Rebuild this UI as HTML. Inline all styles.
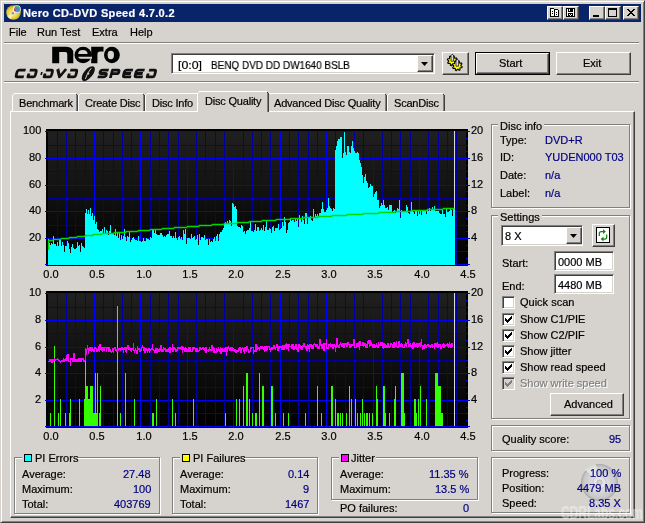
<!DOCTYPE html><html><head><meta charset="utf-8"><style>
*{margin:0;padding:0;box-sizing:border-box}
html,body{width:645px;height:523px;overflow:hidden;background:#d6d3ce;font-family:'Liberation Sans', sans-serif;font-size:11px}
.t{position:absolute;white-space:nowrap;line-height:13px;font-size:11px;will-change:transform;-webkit-text-stroke:0.2px currentColor}
.b{position:absolute}
.raised{background:#d6d3ce;border:1px solid;border-color:#fff #404040 #404040 #fff;box-shadow:inset -1px -1px #808080, inset 1px 1px #d6d3ce}
.sunken{background:#fff;border:1px solid;border-color:#808080 #fff #fff #808080;box-shadow:inset 1px 1px #404040, inset -1px -1px #d6d3ce}
.grp{border:1px solid #808080;box-shadow:inset 1px 1px #fff, 1px 1px #fff}
svg{position:absolute;left:0;top:0}
</style></head><body>
<div class="b" style="left:0px;top:0px;width:645px;height:523px;border-top:1px solid #d6d3ce;border-left:1px solid #d6d3ce;border-right:1px solid #404040;border-bottom:1px solid #404040;box-shadow:inset 1px 1px #fff, inset -1px -1px #808080"></div>
<div class="b" style="left:4px;top:4px;width:637px;height:18px;background:#0a246a"></div>
<div class="t" style="left:23px;top:7px;color:#fff;font-weight:bold;letter-spacing:0.33px">Nero CD-DVD Speed 4.7.0.2</div>
<svg width="645" height="30" style="left:0;top:0">
<defs><radialGradient id="gd" cx="0.45" cy="0.55" r="0.6"><stop offset="0" stop-color="#f8f0c0"/><stop offset="0.55" stop-color="#e8d040"/><stop offset="1" stop-color="#b09810"/></radialGradient></defs>
<circle cx="13.5" cy="12.5" r="7.3" fill="url(#gd)"/>
<path d="M13.5 12.5 L7 16 A7.3 7.3 0 0 0 11 19.3 Z" fill="#fff6d0" opacity="0.7"/>
<circle cx="16.9" cy="9.2" r="3.9" fill="#f4f4f4"/>
<circle cx="17.2" cy="9.4" r="2.9" fill="#30a0e8"/>
<path d="M14.6 7.2 A3 3 0 0 1 19.5 7.5" stroke="#40b040" stroke-width="1" fill="none"/>
<path d="M14.6 8.5 L14.8 11" stroke="#e02010" stroke-width="1.1"/>
<path d="M15.5 7 L18.3 10.4" stroke="#d04040" stroke-width="0.9"/>
<circle cx="12.8" cy="13.2" r="1.2" fill="#9090a0"/>
</svg>
<div class="b" style="left:547px;top:6px;width:16px;height:14px;background:#d6d3ce;border:1px solid;border-color:#fff #404040 #404040 #fff;box-shadow:inset -1px -1px #808080, inset 1px 1px #d6d3ce"></div>
<div class="b" style="left:563px;top:6px;width:16px;height:14px;background:#d6d3ce;border:1px solid;border-color:#fff #404040 #404040 #fff;box-shadow:inset -1px -1px #808080, inset 1px 1px #d6d3ce"></div>
<div class="b" style="left:589px;top:6px;width:16px;height:14px;background:#d6d3ce;border:1px solid;border-color:#fff #404040 #404040 #fff;box-shadow:inset -1px -1px #808080, inset 1px 1px #d6d3ce"></div>
<div class="b" style="left:605px;top:6px;width:16px;height:14px;background:#d6d3ce;border:1px solid;border-color:#fff #404040 #404040 #fff;box-shadow:inset -1px -1px #808080, inset 1px 1px #d6d3ce"></div>
<div class="b" style="left:623px;top:6px;width:16px;height:14px;background:#d6d3ce;border:1px solid;border-color:#fff #404040 #404040 #fff;box-shadow:inset -1px -1px #808080, inset 1px 1px #d6d3ce"></div>
<svg width="645" height="30" style="left:0;top:0" shape-rendering="crispEdges">
<g fill="none" stroke="#000" stroke-width="1">
<!-- copy/book icon -->
</g>
<path d="M550.5 8.5 H553.5 L554.5 9.5 V16.5 H550.5 Z" fill="#fff" stroke="#000"/>
<path d="M554.5 9.5 H557.5 L558.5 10.5 V16.5 H554.5 Z" fill="#fff" stroke="#000"/>
<g fill="#000">
<rect x="552" y="11" width="1" height="1"/><rect x="552" y="13" width="1" height="1"/>
<rect x="556" y="12" width="1" height="1"/><rect x="556" y="14" width="1" height="1"/>
<rect x="566" y="8" width="9" height="9"/>
</g>
<g fill="#fff">
<rect x="567" y="9" width="1" height="7"/><rect x="573" y="9" width="1" height="7"/>
<rect x="568" y="12" width="5" height="1"/><rect x="569" y="9" width="1" height="2"/>
<rect x="569" y="14" width="1" height="1"/><rect x="570" y="15" width="1" height="1"/><rect x="571" y="14" width="1" height="1"/>
</g>
<g fill="#000">
<!-- minimize -->
<rect x="593" y="15" width="6" height="2"/>
<!-- maximize -->
<rect x="608" y="8" width="9" height="2"/><rect x="608" y="8" width="1" height="9"/><rect x="616" y="8" width="1" height="9"/><rect x="608" y="16" width="9" height="1"/>
</g>
<g fill="#000"><rect x="627" y="9" width="2" height="1"/><rect x="633" y="9" width="2" height="1"/><rect x="628" y="10" width="2" height="1"/><rect x="632" y="10" width="2" height="1"/><rect x="629" y="11" width="2" height="1"/><rect x="631" y="11" width="2" height="1"/><rect x="630" y="12" width="2" height="1"/><rect x="630" y="12" width="2" height="1"/><rect x="631" y="13" width="2" height="1"/><rect x="629" y="13" width="2" height="1"/><rect x="632" y="14" width="2" height="1"/><rect x="628" y="14" width="2" height="1"/><rect x="633" y="15" width="2" height="1"/><rect x="627" y="15" width="2" height="1"/></g>
</svg>
<div class="t" style="left:9px;top:26px;color:#000;font-weight:normal;">File</div>
<div class="t" style="left:37px;top:26px;color:#000;font-weight:normal;">Run Test</div>
<div class="t" style="left:92px;top:26px;color:#000;font-weight:normal;">Extra</div>
<div class="t" style="left:130px;top:26px;color:#000;font-weight:normal;">Help</div>
<div class="b" style="left:4px;top:42px;width:635px;height:1px;background:#808080"></div>
<div class="b" style="left:4px;top:43px;width:635px;height:1px;background:#fff"></div>
<div class="b" style="left:4px;top:81px;width:635px;height:1px;background:#808080"></div>
<div class="b" style="left:4px;top:82px;width:635px;height:1px;background:#fff"></div>
<svg width="645" height="523" style="left:0;top:0">
<g fill="#000">
<path d="M52.2 63.2 V46.8 H66.3 Q73.3 46.8 73.3 53.5 V63.2 H67.3 V54.2 Q67.3 52 65.3 52 H59.2 V63.2 Z"/>
<ellipse cx="83.1" cy="55" rx="8.6" ry="8.3"/>
<path d="M91.2 63.2 V46.8 H103.5 V51.4 H100 Q97.4 51.4 97.4 54.5 V63.2 Z"/>
<ellipse cx="111.9" cy="55" rx="7.9" ry="8.3"/>
</g>
<g fill="#d6d3ce">
<path d="M78.2 53.9 H87.6 Q87.4 50.1 82.9 50.1 Q78.2 50.1 78.2 53.9 Z"/>
<path d="M78.3 56.7 H92 V58.7 H80.6 Q78.3 58.7 78.3 56.7 Z"/>
<ellipse cx="110.8" cy="55" rx="3.2" ry="4.2"/>
</g>
<g fill="none" stroke="#111" stroke-width="2.8" stroke-linejoin="round">

<path transform="translate(16.7 69) skewX(-15)" d="M9.2 1.15 H3 Q1.15 1.15 1.15 3.3 V5.7 Q1.15 7.85 3 7.85 H9.2"/>
<path transform="translate(28.9 69) skewX(-15)" d="M1.15 1.15 H6.6 Q8.049999999999999 1.15 8.049999999999999 3.3 V5.7 Q8.049999999999999 7.85 6.6 7.85 H1.15 V4.5"/>
<path transform="translate(40.9 69) skewX(-15)" d="M1 4.5 H2.6"/>
<path transform="translate(45.1 69) skewX(-15)" d="M1.15 1.15 H6.6 Q8.049999999999999 1.15 8.049999999999999 3.3 V5.7 Q8.049999999999999 7.85 6.6 7.85 H1.15 V4.5"/>
<path transform="translate(57.1 69) skewX(-15)" d="M0.6 0 L4.6 7.85 L9.0 0"/>
<path transform="translate(69.4 69) skewX(-15)" d="M1.15 1.15 H6.6 Q8.049999999999999 1.15 8.049999999999999 3.3 V5.7 Q8.049999999999999 7.85 6.6 7.85 H1.15 V4.5"/>
<path transform="translate(99.80000000000001 69) skewX(-15)" d="M9.2 1.15 H3 Q1.15 1.15 1.15 2.9 Q1.15 4.5 3 4.5 H6.4 Q8.049999999999999 4.5 8.049999999999999 6.1 Q8.049999999999999 7.85 6.2 7.85 H0"/>
<path transform="translate(111.60000000000001 69) skewX(-15)" d="M1.15 9 V1.15 H6.4 Q8.049999999999999 1.15 8.049999999999999 2.9 Q8.049999999999999 4.7 6.4 4.7 H1.15"/>
<path transform="translate(124.0 69) skewX(-15)" d="M9.2 1.15 H3 Q1.15 1.15 1.15 3.3 V5.7 Q1.15 7.85 3 7.85 H9.2 M1.15 4.5 H8.2"/>
<path transform="translate(135.70000000000002 69) skewX(-15)" d="M9.2 1.15 H3 Q1.15 1.15 1.15 3.3 V5.7 Q1.15 7.85 3 7.85 H9.2 M1.15 4.5 H8.2"/>
<path transform="translate(148.20000000000002 69) skewX(-15)" d="M1.15 1.15 H6.6 Q8.049999999999999 1.15 8.049999999999999 3.3 V5.7 Q8.049999999999999 7.85 6.6 7.85 H1.15 V4.5"/>
</g>
<g transform="translate(88.3 73.6) rotate(-50)"><ellipse cx="0" cy="0" rx="8.9" ry="4.3" fill="#111"/><path d="M-6 1.2 Q0 -1.4 6 -1.2" stroke="#d6d3ce" stroke-width="0.9" fill="none"/><circle cx="0" cy="0" r="1" fill="#d6d3ce"/></g>
</svg>
<div class="b sunken" style="left:171px;top:53px;width:264px;height:21px;"></div>
<div class="t" style="left:178px;top:59px;color:#000;font-weight:normal;transform:scaleX(1.12);transform-origin:0 0">[0:0]</div>
<div class="t" style="left:211px;top:59px;color:#000;font-weight:normal;transform:scaleX(0.905);transform-origin:0 0">BENQ DVD DD DW1640 BSLB</div>
<div class="b raised" style="left:417px;top:55px;width:16px;height:17px;"></div>
<svg width="645" height="523"><path d="M421 62 h7 l-3.5 4 z" fill="#000"/></svg>
<div class="b raised" style="left:442px;top:52px;width:27px;height:23px"></div>
<svg width="645" height="523"><polygon points="455.90,60.70 457.20,61.68 456.92,62.61 455.29,62.70 454.85,63.25 455.08,64.86 454.21,65.32 453.00,64.23 452.30,64.30 451.32,65.60 450.39,65.32 450.30,63.69 449.75,63.25 448.14,63.48 447.68,62.61 448.77,61.40 448.70,60.70 447.40,59.72 447.68,58.79 449.31,58.70 449.75,58.15 449.52,56.54 450.39,56.08 451.60,57.17 452.30,57.10 453.28,55.80 454.21,56.08 454.30,57.71 454.85,58.15 456.46,57.92 456.92,58.79 455.83,60.00" fill="#ffff00" stroke="#000" stroke-width="1.1" stroke-linejoin="round"/><polygon points="460.90,65.70 462.20,66.68 461.92,67.61 460.29,67.70 459.85,68.25 460.08,69.86 459.21,70.32 458.00,69.23 457.30,69.30 456.32,70.60 455.39,70.32 455.30,68.69 454.75,68.25 453.14,68.48 452.68,67.61 453.77,66.40 453.70,65.70 452.40,64.72 452.68,63.79 454.31,63.70 454.75,63.15 454.52,61.54 455.39,61.08 456.60,62.17 457.30,62.10 458.28,60.80 459.21,61.08 459.30,62.71 459.85,63.15 461.46,62.92 461.92,63.79 460.83,65.00" fill="#ffff00" stroke="#000" stroke-width="1.1" stroke-linejoin="round"/><path d="M451 61.2 V55.7 L452.3 54 L453.6 55.7 V61.2 Z" fill="#d8d8e8" stroke="#000" stroke-width="0.7"/><path d="M456 66.2 V60.7 L457.3 59 L458.6 60.7 V66.2 Z" fill="#d8d8e8" stroke="#000" stroke-width="0.7"/></svg>
<div class="b" style="left:475px;top:52px;width:75px;height:23px;border:1px solid #000"></div>
<div class="b raised" style="left:476px;top:53px;width:73px;height:21px"></div>
<div class="t" style="left:499px;top:57px;color:#000;font-weight:normal;">Start</div>
<div class="b raised" style="left:556px;top:52px;width:75px;height:23px"></div>
<div class="t" style="left:583px;top:57px;color:#000;font-weight:normal;">Exit</div>
<div class="b" style="left:10px;top:111px;width:625px;height:407px;border-top:1px solid #fff;border-left:1px solid #fff;border-right:1px solid #404040;border-bottom:1px solid #404040;box-shadow:inset -1px -1px #808080"></div>
<svg width="645" height="523" shape-rendering="crispEdges"><rect x="12" y="93" width="66" height="18" fill="#d6d3ce"/><rect x="14" y="93" width="62" height="1" fill="#fff"/><rect x="13" y="94" width="1" height="1" fill="#fff"/><rect x="12" y="95" width="1" height="16" fill="#fff"/><rect x="76" y="94" width="1" height="1" fill="#404040"/><rect x="76" y="95" width="1" height="16" fill="#808080"/><rect x="77" y="95" width="1" height="16" fill="#404040"/></svg>
<div class="t" style="left:19px;top:97px;color:#000;font-weight:normal;letter-spacing:-0.2px">Benchmark</div>
<svg width="645" height="523" shape-rendering="crispEdges"><rect x="78" y="93" width="67" height="18" fill="#d6d3ce"/><rect x="80" y="93" width="63" height="1" fill="#fff"/><rect x="79" y="94" width="1" height="1" fill="#fff"/><rect x="78" y="95" width="1" height="16" fill="#fff"/><rect x="143" y="94" width="1" height="1" fill="#404040"/><rect x="143" y="95" width="1" height="16" fill="#808080"/><rect x="144" y="95" width="1" height="16" fill="#404040"/></svg>
<div class="t" style="left:85px;top:97px;color:#000;font-weight:normal;letter-spacing:-0.2px">Create Disc</div>
<svg width="645" height="523" shape-rendering="crispEdges"><rect x="145" y="93" width="55" height="18" fill="#d6d3ce"/><rect x="147" y="93" width="51" height="1" fill="#fff"/><rect x="146" y="94" width="1" height="1" fill="#fff"/><rect x="145" y="95" width="1" height="16" fill="#fff"/><rect x="198" y="94" width="1" height="1" fill="#404040"/><rect x="198" y="95" width="1" height="16" fill="#808080"/><rect x="199" y="95" width="1" height="16" fill="#404040"/></svg>
<div class="t" style="left:152px;top:97px;color:#000;font-weight:normal;letter-spacing:-0.2px">Disc Info</div>
<svg width="645" height="523" shape-rendering="crispEdges"><rect x="267" y="93" width="120" height="18" fill="#d6d3ce"/><rect x="269" y="93" width="116" height="1" fill="#fff"/><rect x="268" y="94" width="1" height="1" fill="#fff"/><rect x="267" y="95" width="1" height="16" fill="#fff"/><rect x="385" y="94" width="1" height="1" fill="#404040"/><rect x="385" y="95" width="1" height="16" fill="#808080"/><rect x="386" y="95" width="1" height="16" fill="#404040"/></svg>
<div class="t" style="left:274px;top:97px;color:#000;font-weight:normal;letter-spacing:-0.2px">Advanced Disc Quality</div>
<svg width="645" height="523" shape-rendering="crispEdges"><rect x="387" y="93" width="58" height="18" fill="#d6d3ce"/><rect x="389" y="93" width="54" height="1" fill="#fff"/><rect x="388" y="94" width="1" height="1" fill="#fff"/><rect x="387" y="95" width="1" height="16" fill="#fff"/><rect x="443" y="94" width="1" height="1" fill="#404040"/><rect x="443" y="95" width="1" height="16" fill="#808080"/><rect x="444" y="95" width="1" height="16" fill="#404040"/></svg>
<div class="t" style="left:394px;top:97px;color:#000;font-weight:normal;letter-spacing:-0.2px">ScanDisc</div>
<svg width="645" height="523" shape-rendering="crispEdges"><rect x="197" y="91" width="72" height="21" fill="#d6d3ce"/><rect x="199" y="91" width="68" height="1" fill="#fff"/><rect x="198" y="92" width="1" height="1" fill="#fff"/><rect x="197" y="93" width="1" height="19" fill="#fff"/><rect x="267" y="92" width="1" height="1" fill="#404040"/><rect x="267" y="93" width="1" height="19" fill="#808080"/><rect x="268" y="93" width="1" height="19" fill="#404040"/></svg>
<div class="t" style="left:205px;top:95px;color:#000;font-weight:normal;letter-spacing:-0.2px">Disc Quality</div>
<svg width="645" height="523" style="left:0;top:0" shape-rendering="crispEdges"><defs><linearGradient id="bg" x1="0" y1="0" x2="0" y2="1"><stop offset="0" stop-color="#202020"/><stop offset="1" stop-color="#000"/></linearGradient></defs>
<rect x="46" y="129" width="422" height="137" fill="#000"/>
<rect x="45" y="129" width="1" height="1" fill="#d6d3ce"/>
<rect x="48" y="131" width="418" height="134" fill="url(#bg)"/>
<rect x="45" y="131" width="425" height="1" fill="#0000ff"/>
<rect x="48" y="145" width="418" height="1" fill="#0000a0"/>
<rect x="45" y="158" width="425" height="1" fill="#0000ff"/>
<rect x="48" y="171" width="418" height="1" fill="#0000a0"/>
<rect x="45" y="185" width="425" height="1" fill="#0000ff"/>
<rect x="48" y="198" width="418" height="1" fill="#0000a0"/>
<rect x="45" y="211" width="425" height="1" fill="#0000ff"/>
<rect x="48" y="225" width="418" height="1" fill="#0000a0"/>
<rect x="45" y="238" width="425" height="1" fill="#0000ff"/>
<rect x="48" y="251" width="418" height="1" fill="#0000a0"/>
<rect x="45" y="264" width="425" height="1" fill="#0000ff"/>
<rect x="57" y="131" width="1" height="135" fill="#0000a0"/>
<rect x="66" y="131" width="1" height="135" fill="#0000a0"/>
<rect x="75" y="131" width="1" height="135" fill="#0000a0"/>
<rect x="85" y="131" width="1" height="135" fill="#0000a0"/>
<rect x="94" y="131" width="1" height="135" fill="#0000ff"/>
<rect x="103" y="131" width="1" height="135" fill="#0000a0"/>
<rect x="113" y="131" width="1" height="135" fill="#0000a0"/>
<rect x="122" y="131" width="1" height="135" fill="#0000a0"/>
<rect x="131" y="131" width="1" height="135" fill="#0000a0"/>
<rect x="140" y="131" width="1" height="135" fill="#0000ff"/>
<rect x="150" y="131" width="1" height="135" fill="#0000a0"/>
<rect x="159" y="131" width="1" height="135" fill="#0000a0"/>
<rect x="168" y="131" width="1" height="135" fill="#0000a0"/>
<rect x="178" y="131" width="1" height="135" fill="#0000a0"/>
<rect x="187" y="131" width="1" height="135" fill="#0000ff"/>
<rect x="196" y="131" width="1" height="135" fill="#0000a0"/>
<rect x="205" y="131" width="1" height="135" fill="#0000a0"/>
<rect x="215" y="131" width="1" height="135" fill="#0000a0"/>
<rect x="224" y="131" width="1" height="135" fill="#0000a0"/>
<rect x="233" y="131" width="1" height="135" fill="#0000ff"/>
<rect x="243" y="131" width="1" height="135" fill="#0000a0"/>
<rect x="252" y="131" width="1" height="135" fill="#0000a0"/>
<rect x="261" y="131" width="1" height="135" fill="#0000a0"/>
<rect x="270" y="131" width="1" height="135" fill="#0000a0"/>
<rect x="280" y="131" width="1" height="135" fill="#0000ff"/>
<rect x="289" y="131" width="1" height="135" fill="#0000a0"/>
<rect x="298" y="131" width="1" height="135" fill="#0000a0"/>
<rect x="308" y="131" width="1" height="135" fill="#0000a0"/>
<rect x="317" y="131" width="1" height="135" fill="#0000a0"/>
<rect x="326" y="131" width="1" height="135" fill="#0000ff"/>
<rect x="335" y="131" width="1" height="135" fill="#0000a0"/>
<rect x="345" y="131" width="1" height="135" fill="#0000a0"/>
<rect x="354" y="131" width="1" height="135" fill="#0000a0"/>
<rect x="363" y="131" width="1" height="135" fill="#0000a0"/>
<rect x="373" y="131" width="1" height="135" fill="#0000ff"/>
<rect x="382" y="131" width="1" height="135" fill="#0000a0"/>
<rect x="391" y="131" width="1" height="135" fill="#0000a0"/>
<rect x="400" y="131" width="1" height="135" fill="#0000a0"/>
<rect x="410" y="131" width="1" height="135" fill="#0000a0"/>
<rect x="419" y="131" width="1" height="135" fill="#0000ff"/>
<rect x="428" y="131" width="1" height="135" fill="#0000a0"/>
<rect x="438" y="131" width="1" height="135" fill="#0000a0"/>
<rect x="447" y="131" width="1" height="135" fill="#0000a0"/>
<rect x="456" y="131" width="1" height="135" fill="#0000a0"/>
<rect x="466" y="138" width="2" height="1" fill="#0000ff"/>
<rect x="466" y="145" width="2" height="1" fill="#0000ff"/>
<rect x="466" y="151" width="2" height="1" fill="#0000ff"/>
<rect x="466" y="165" width="2" height="1" fill="#0000ff"/>
<rect x="466" y="171" width="2" height="1" fill="#0000ff"/>
<rect x="466" y="178" width="2" height="1" fill="#0000ff"/>
<rect x="466" y="191" width="2" height="1" fill="#0000ff"/>
<rect x="466" y="198" width="2" height="1" fill="#0000ff"/>
<rect x="466" y="205" width="2" height="1" fill="#0000ff"/>
<rect x="466" y="218" width="2" height="1" fill="#0000ff"/>
<rect x="466" y="225" width="2" height="1" fill="#0000ff"/>
<rect x="466" y="231" width="2" height="1" fill="#0000ff"/>
<rect x="466" y="245" width="2" height="1" fill="#0000ff"/>
<rect x="466" y="251" width="2" height="1" fill="#0000ff"/>
<rect x="466" y="258" width="2" height="1" fill="#0000ff"/>
<rect x="454" y="131" width="1" height="134" fill="#d8d8d8"/>
<path d="M48 265V239H49V243H50V245H51V243H52V244H53V236H54V244H55V244H56V246H57V242H58V246H59V239H60V240H61V246H62V242H63V245H64V252H65V246H66V246H67V241H68V243H69V249H70V253H71V247H72V244H73V248H74V249H75V249H76V248H77V242H78V246H79V245H80V252H81V243H82V246H83V247H84V248H85V213H86V209H87V214H88V210H89V214H90V208H91V216H92V213H93V220H94V216H95V224H96V222H97V229H98V230H99V232H100V231H101V231H102V229H103V233H104V227H105V233H106V230H107V231H108V235H109V231H110V225H111V233H112V234H113V234H114V235H115V229H116V236H117V232H118V238H119V233H120V240H121V235H122V239H123V236H124V229H125V237H126V241H127V236H128V237H129V231H130V242H131V240H132V238H133V237H134V239H135V240H136V240H137V241H138V236H139V241H140V241H141V242H142V241H143V238H144V241H145V241H146V238H147V239H148V239H149V240H150V237H151V238H152V229H153V230H154V233H155V230H156V234H157V235H158V235H159V235H160V233H161V233H162V235H163V237H164V236H165V237H166V235H167V234H168V234H169V231H170V236H171V236H172V238H173V236H174V238H175V232H176V238H177V240H178V237H179V236H180V239H181V237H182V240H183V230H184V234H185V229H186V244H187V238H188V238H189V238H190V239H191V234H192V238H193V237H194V236H195V240H196V239H197V235H198V245H199V234H200V240H201V237H202V237H203V238H204V235H205V240H206V239H207V239H208V245H209V239H210V242H211V241H212V242H213V239H214V237H215V241H216V236H217V234H218V241H219V234H220V232H221V232H222V230H223V228H224V224H225V222H226V224H227V221H228V223H229V220H230V221H231V226H232V203H233V204H234V207H235V206H236V209H237V226H238V227H239V227H240V228H241V225H242V226H243V232H244V231H245V234H246V231H247V230H248V230H249V228H250V221H251V231H252V231H253V232H254V230H255V224H256V231H257V227H258V227H259V231H260V230H261V228H262V230H263V225H264V231H265V227H266V221H267V230H268V230H269V228H270V229H271V233H272V227H273V226H274V231H275V228H276V228H277V228H278V224H279V230H280V229H281V228H282V222H283V226H284V217H285V222H286V233H287V230H288V223H289V222H290V219H291V221H292V220H293V220H294V222H295V218H296V221H297V219H298V227H299V215H300V219H301V222H302V216H303V220H304V224H305V213H306V213H307V224H308V218H309V217H310V216H311V220H312V221H313V209H314V218H315V214H316V216H317V214H318V216H319V213H320V213H321V209H322V202H323V209H324V212H325V212H326V210H327V208H328V198H329V206H330V208H331V209H332V211H333V208H334V209H335V150H336V146H337V141H338V139H339V139H340V137H341V137H342V158H343V153H344V132H345V152H346V155H347V146H348V146H349V152H350V153H351V146H352V141H353V148H354V151H355V153H356V153H357V152H358V153H359V160H360V163H361V167H362V175H363V183H364V177H365V174H366V181H367V183H368V188H369V187H370V184H371V186H372V186H373V197H374V194H375V192H376V191H377V200H378V200H379V208H380V206H381V203H382V205H383V200H384V205H385V208H386V208H387V207H388V210H389V205H390V205H391V205H392V213H393V211H394V210H395V213H396V212H397V208H398V209H399V200H400V218H401V210H402V211H403V211H404V212H405V211H406V205H407V207H408V213H409V214H410V212H411V202H412V211H413V212H414V214H415V210H416V211H417V216H418V210H419V214H420V210H421V215H422V210H423V211H424V210H425V210H426V214H427V210H428V211H429V208H430V211H431V210H432V207H433V210H434V206H435V211H436V211H437V211H438V211H439V213H440V214H441V214H442V210H443V214H444V214H445V217H446V208H447V212H448V212H449V211H450V209H451V210H452V216H453V208H454V209H455V265Z" fill="#00ffff"/>
<path d="M48.5 250 V240.5L49.5 240.5L50.5 240.5L51.5 240.5L52.5 240.5L53.5 239.5L54.5 239.5L55.5 239.5L56.5 239.5L57.5 239.5L58.5 239.5L59.5 239.5L60.5 239.5L61.5 238.5L62.5 238.5L63.5 238.5L64.5 238.5L65.5 238.5L66.5 238.5L67.5 238.5L68.5 238.5L69.5 237.5L70.5 237.5L71.5 237.5L72.5 237.5L73.5 237.5L74.5 237.5L75.5 237.5L76.5 237.5L77.5 236.5L78.5 236.5L79.5 236.5L80.5 236.5L81.5 236.5L82.5 236.5L83.5 236.5L84.5 236.5L85.5 235.5L86.5 235.5L87.5 235.5L88.5 235.5L89.5 235.5L90.5 235.5L91.5 235.5L92.5 235.5L93.5 234.5L94.5 234.5L95.5 234.5L96.5 234.5L97.5 234.5L98.5 234.5L99.5 234.5L100.5 234.5L101.5 234.5L102.5 233.5L103.5 233.5L104.5 233.5L105.5 233.5L106.5 233.5L107.5 233.5L108.5 233.5L109.5 233.5L110.5 233.5L111.5 233.5L112.5 233.5L113.5 233.5L114.5 232.5L115.5 232.5L116.5 232.5L117.5 232.5L118.5 232.5L119.5 232.5L120.5 232.5L121.5 232.5L122.5 232.5L123.5 232.5L124.5 232.5L125.5 232.5L126.5 231.5L127.5 231.5L128.5 231.5L129.5 231.5L130.5 231.5L131.5 231.5L132.5 231.5L133.5 231.5L134.5 231.5L135.5 231.5L136.5 231.5L137.5 231.5L138.5 230.5L139.5 230.5L140.5 230.5L141.5 230.5L142.5 230.5L143.5 230.5L144.5 230.5L145.5 230.5L146.5 230.5L147.5 230.5L148.5 230.5L149.5 230.5L150.5 229.5L151.5 229.5L152.5 229.5L153.5 229.5L154.5 229.5L155.5 229.5L156.5 229.5L157.5 229.5L158.5 229.5L159.5 229.5L160.5 229.5L161.5 229.5L162.5 228.5L163.5 228.5L164.5 228.5L165.5 228.5L166.5 228.5L167.5 228.5L168.5 228.5L169.5 228.5L170.5 228.5L171.5 228.5L172.5 228.5L173.5 228.5L174.5 227.5L175.5 227.5L176.5 227.5L177.5 227.5L178.5 227.5L179.5 227.5L180.5 227.5L181.5 227.5L182.5 227.5L183.5 227.5L184.5 227.5L185.5 227.5L186.5 227.5L187.5 226.5L188.5 226.5L189.5 226.5L190.5 226.5L191.5 226.5L192.5 226.5L193.5 226.5L194.5 226.5L195.5 226.5L196.5 226.5L197.5 226.5L198.5 226.5L199.5 225.5L200.5 225.5L201.5 225.5L202.5 225.5L203.5 225.5L204.5 225.5L205.5 225.5L206.5 225.5L207.5 225.5L208.5 225.5L209.5 225.5L210.5 225.5L211.5 225.5L212.5 224.5L213.5 224.5L214.5 224.5L215.5 224.5L216.5 224.5L217.5 224.5L218.5 224.5L219.5 224.5L220.5 224.5L221.5 224.5L222.5 224.5L223.5 224.5L224.5 223.5L225.5 223.5L226.5 223.5L227.5 223.5L228.5 223.5L229.5 223.5L230.5 223.5L231.5 223.5L232.5 223.5L233.5 223.5L234.5 223.5L235.5 223.5L236.5 223.5L237.5 222.5L238.5 222.5L239.5 222.5L240.5 222.5L241.5 222.5L242.5 222.5L243.5 222.5L244.5 222.5L245.5 222.5L246.5 222.5L247.5 222.5L248.5 222.5L249.5 221.5L250.5 221.5L251.5 221.5L252.5 221.5L253.5 221.5L254.5 221.5L255.5 221.5L256.5 221.5L257.5 221.5L258.5 221.5L259.5 221.5L260.5 221.5L261.5 221.5L262.5 220.5L263.5 220.5L264.5 220.5L265.5 220.5L266.5 220.5L267.5 220.5L268.5 220.5L269.5 220.5L270.5 220.5L271.5 220.5L272.5 220.5L273.5 220.5L274.5 220.5L275.5 220.5L276.5 219.5L277.5 219.5L278.5 219.5L279.5 219.5L280.5 219.5L281.5 219.5L282.5 219.5L283.5 219.5L284.5 219.5L285.5 219.5L286.5 219.5L287.5 219.5L288.5 219.5L289.5 219.5L290.5 218.5L291.5 218.5L292.5 218.5L293.5 218.5L294.5 218.5L295.5 218.5L296.5 218.5L297.5 218.5L298.5 218.5L299.5 218.5L300.5 218.5L301.5 218.5L302.5 218.5L303.5 218.5L304.5 217.5L305.5 217.5L306.5 217.5L307.5 217.5L308.5 217.5L309.5 217.5L310.5 217.5L311.5 217.5L312.5 217.5L313.5 217.5L314.5 217.5L315.5 217.5L316.5 217.5L317.5 217.5L318.5 216.5L319.5 216.5L320.5 216.5L321.5 216.5L322.5 216.5L323.5 216.5L324.5 216.5L325.5 216.5L326.5 216.5L327.5 216.5L328.5 216.5L329.5 216.5L330.5 216.5L331.5 216.5L332.5 215.5L333.5 215.5L334.5 215.5L335.5 215.5L336.5 215.5L337.5 215.5L338.5 215.5L339.5 215.5L340.5 215.5L341.5 215.5L342.5 215.5L343.5 215.5L344.5 215.5L345.5 215.5L346.5 215.5L347.5 214.5L348.5 214.5L349.5 214.5L350.5 214.5L351.5 214.5L352.5 214.5L353.5 214.5L354.5 214.5L355.5 214.5L356.5 214.5L357.5 214.5L358.5 214.5L359.5 214.5L360.5 214.5L361.5 214.5L362.5 214.5L363.5 213.5L364.5 213.5L365.5 213.5L366.5 213.5L367.5 213.5L368.5 213.5L369.5 213.5L370.5 213.5L371.5 213.5L372.5 213.5L373.5 213.5L374.5 213.5L375.5 213.5L376.5 213.5L377.5 213.5L378.5 213.5L379.5 212.5L380.5 212.5L381.5 212.5L382.5 212.5L383.5 212.5L384.5 212.5L385.5 212.5L386.5 212.5L387.5 212.5L388.5 212.5L389.5 212.5L390.5 212.5L391.5 212.5L392.5 212.5L393.5 212.5L394.5 212.5L395.5 211.5L396.5 211.5L397.5 211.5L398.5 211.5L399.5 211.5L400.5 211.5L401.5 211.5L402.5 211.5L403.5 211.5L404.5 211.5L405.5 211.5L406.5 211.5L407.5 211.5L408.5 211.5L409.5 211.5L410.5 211.5L411.5 210.5L412.5 210.5L413.5 210.5L414.5 210.5L415.5 210.5L416.5 210.5L417.5 210.5L418.5 210.5L419.5 210.5L420.5 210.5L421.5 210.5L422.5 210.5L423.5 210.5L424.5 210.5L425.5 210.5L426.5 210.5L427.5 209.5L428.5 209.5L429.5 209.5L430.5 209.5L431.5 209.5L432.5 209.5L433.5 209.5L434.5 209.5L435.5 209.5L436.5 209.5L437.5 209.5L438.5 209.5L439.5 209.5L440.5 209.5L441.5 209.5L442.5 209.5L443.5 208.5L444.5 208.5L445.5 208.5L446.5 208.5L447.5 208.5L448.5 208.5L449.5 208.5L450.5 208.5L451.5 208.5L452.5 208.5L453.5 208.5L454.5 208.5" fill="none" stroke="#00d800" stroke-width="1.3" shape-rendering="geometricPrecision"/>
<rect x="46" y="291" width="422" height="137" fill="#000"/>
<rect x="45" y="291" width="1" height="1" fill="#d6d3ce"/>
<rect x="48" y="293" width="418" height="134" fill="url(#bg)"/>
<rect x="45" y="293" width="425" height="1" fill="#0000ff"/>
<rect x="48" y="307" width="418" height="1" fill="#0000a0"/>
<rect x="45" y="320" width="425" height="1" fill="#0000ff"/>
<rect x="48" y="333" width="418" height="1" fill="#0000a0"/>
<rect x="45" y="347" width="425" height="1" fill="#0000ff"/>
<rect x="48" y="360" width="418" height="1" fill="#0000a0"/>
<rect x="45" y="373" width="425" height="1" fill="#0000ff"/>
<rect x="48" y="387" width="418" height="1" fill="#0000a0"/>
<rect x="45" y="400" width="425" height="1" fill="#0000ff"/>
<rect x="48" y="413" width="418" height="1" fill="#0000a0"/>
<rect x="45" y="426" width="425" height="1" fill="#0000ff"/>
<rect x="57" y="293" width="1" height="135" fill="#0000a0"/>
<rect x="66" y="293" width="1" height="135" fill="#0000a0"/>
<rect x="75" y="293" width="1" height="135" fill="#0000a0"/>
<rect x="85" y="293" width="1" height="135" fill="#0000a0"/>
<rect x="94" y="293" width="1" height="135" fill="#0000ff"/>
<rect x="103" y="293" width="1" height="135" fill="#0000a0"/>
<rect x="113" y="293" width="1" height="135" fill="#0000a0"/>
<rect x="122" y="293" width="1" height="135" fill="#0000a0"/>
<rect x="131" y="293" width="1" height="135" fill="#0000a0"/>
<rect x="140" y="293" width="1" height="135" fill="#0000ff"/>
<rect x="150" y="293" width="1" height="135" fill="#0000a0"/>
<rect x="159" y="293" width="1" height="135" fill="#0000a0"/>
<rect x="168" y="293" width="1" height="135" fill="#0000a0"/>
<rect x="178" y="293" width="1" height="135" fill="#0000a0"/>
<rect x="187" y="293" width="1" height="135" fill="#0000ff"/>
<rect x="196" y="293" width="1" height="135" fill="#0000a0"/>
<rect x="205" y="293" width="1" height="135" fill="#0000a0"/>
<rect x="215" y="293" width="1" height="135" fill="#0000a0"/>
<rect x="224" y="293" width="1" height="135" fill="#0000a0"/>
<rect x="233" y="293" width="1" height="135" fill="#0000ff"/>
<rect x="243" y="293" width="1" height="135" fill="#0000a0"/>
<rect x="252" y="293" width="1" height="135" fill="#0000a0"/>
<rect x="261" y="293" width="1" height="135" fill="#0000a0"/>
<rect x="270" y="293" width="1" height="135" fill="#0000a0"/>
<rect x="280" y="293" width="1" height="135" fill="#0000ff"/>
<rect x="289" y="293" width="1" height="135" fill="#0000a0"/>
<rect x="298" y="293" width="1" height="135" fill="#0000a0"/>
<rect x="308" y="293" width="1" height="135" fill="#0000a0"/>
<rect x="317" y="293" width="1" height="135" fill="#0000a0"/>
<rect x="326" y="293" width="1" height="135" fill="#0000ff"/>
<rect x="335" y="293" width="1" height="135" fill="#0000a0"/>
<rect x="345" y="293" width="1" height="135" fill="#0000a0"/>
<rect x="354" y="293" width="1" height="135" fill="#0000a0"/>
<rect x="363" y="293" width="1" height="135" fill="#0000a0"/>
<rect x="373" y="293" width="1" height="135" fill="#0000ff"/>
<rect x="382" y="293" width="1" height="135" fill="#0000a0"/>
<rect x="391" y="293" width="1" height="135" fill="#0000a0"/>
<rect x="400" y="293" width="1" height="135" fill="#0000a0"/>
<rect x="410" y="293" width="1" height="135" fill="#0000a0"/>
<rect x="419" y="293" width="1" height="135" fill="#0000ff"/>
<rect x="428" y="293" width="1" height="135" fill="#0000a0"/>
<rect x="438" y="293" width="1" height="135" fill="#0000a0"/>
<rect x="447" y="293" width="1" height="135" fill="#0000a0"/>
<rect x="456" y="293" width="1" height="135" fill="#0000a0"/>
<rect x="466" y="300" width="2" height="1" fill="#0000ff"/>
<rect x="466" y="307" width="2" height="1" fill="#0000ff"/>
<rect x="466" y="313" width="2" height="1" fill="#0000ff"/>
<rect x="466" y="327" width="2" height="1" fill="#0000ff"/>
<rect x="466" y="333" width="2" height="1" fill="#0000ff"/>
<rect x="466" y="340" width="2" height="1" fill="#0000ff"/>
<rect x="466" y="353" width="2" height="1" fill="#0000ff"/>
<rect x="466" y="360" width="2" height="1" fill="#0000ff"/>
<rect x="466" y="367" width="2" height="1" fill="#0000ff"/>
<rect x="466" y="380" width="2" height="1" fill="#0000ff"/>
<rect x="466" y="387" width="2" height="1" fill="#0000ff"/>
<rect x="466" y="393" width="2" height="1" fill="#0000ff"/>
<rect x="466" y="407" width="2" height="1" fill="#0000ff"/>
<rect x="466" y="413" width="2" height="1" fill="#0000ff"/>
<rect x="466" y="420" width="2" height="1" fill="#0000ff"/>
<rect x="50" y="413" width="1" height="13" fill="#33ff00"/>
<rect x="54" y="346" width="1" height="80" fill="#33ff00"/>
<rect x="58" y="413" width="1" height="13" fill="#33ff00"/>
<rect x="60" y="399" width="1" height="27" fill="#33ff00"/>
<rect x="65" y="413" width="1" height="13" fill="#33ff00"/>
<rect x="69" y="413" width="1" height="13" fill="#33ff00"/>
<rect x="70" y="399" width="1" height="27" fill="#33ff00"/>
<rect x="79" y="399" width="1" height="27" fill="#33ff00"/>
<rect x="84" y="399" width="1" height="27" fill="#33ff00"/>
<rect x="85" y="360" width="1" height="66" fill="#33ff00"/>
<rect x="86" y="386" width="1" height="40" fill="#33ff00"/>
<rect x="87" y="386" width="1" height="40" fill="#33ff00"/>
<rect x="88" y="399" width="1" height="27" fill="#33ff00"/>
<rect x="89" y="399" width="1" height="27" fill="#33ff00"/>
<rect x="90" y="386" width="1" height="40" fill="#33ff00"/>
<rect x="91" y="386" width="1" height="40" fill="#33ff00"/>
<rect x="92" y="386" width="1" height="40" fill="#33ff00"/>
<rect x="93" y="413" width="1" height="13" fill="#33ff00"/>
<rect x="94" y="413" width="1" height="13" fill="#33ff00"/>
<rect x="95" y="373" width="1" height="53" fill="#33ff00"/>
<rect x="96" y="413" width="1" height="13" fill="#33ff00"/>
<rect x="97" y="373" width="1" height="53" fill="#33ff00"/>
<rect x="99" y="413" width="1" height="13" fill="#33ff00"/>
<rect x="100" y="386" width="1" height="40" fill="#33ff00"/>
<rect x="117" y="306" width="1" height="120" fill="#33ff00"/>
<rect x="120" y="413" width="1" height="13" fill="#33ff00"/>
<rect x="125" y="373" width="1" height="53" fill="#33ff00"/>
<rect x="134" y="399" width="1" height="27" fill="#33ff00"/>
<rect x="152" y="413" width="1" height="13" fill="#33ff00"/>
<rect x="153" y="413" width="1" height="13" fill="#33ff00"/>
<rect x="156" y="399" width="1" height="27" fill="#33ff00"/>
<rect x="172" y="399" width="1" height="27" fill="#33ff00"/>
<rect x="175" y="413" width="1" height="13" fill="#33ff00"/>
<rect x="193" y="399" width="1" height="27" fill="#33ff00"/>
<rect x="225" y="413" width="1" height="13" fill="#33ff00"/>
<rect x="236" y="399" width="1" height="27" fill="#33ff00"/>
<rect x="239" y="399" width="1" height="27" fill="#33ff00"/>
<rect x="243" y="386" width="1" height="40" fill="#33ff00"/>
<rect x="246" y="373" width="1" height="53" fill="#33ff00"/>
<rect x="247" y="373" width="1" height="53" fill="#33ff00"/>
<rect x="249" y="399" width="1" height="27" fill="#33ff00"/>
<rect x="252" y="413" width="1" height="13" fill="#33ff00"/>
<rect x="255" y="413" width="1" height="13" fill="#33ff00"/>
<rect x="256" y="413" width="1" height="13" fill="#33ff00"/>
<rect x="259" y="373" width="1" height="53" fill="#33ff00"/>
<rect x="262" y="386" width="1" height="40" fill="#33ff00"/>
<rect x="263" y="386" width="1" height="40" fill="#33ff00"/>
<rect x="271" y="386" width="1" height="40" fill="#33ff00"/>
<rect x="272" y="386" width="1" height="40" fill="#33ff00"/>
<rect x="275" y="413" width="1" height="13" fill="#33ff00"/>
<rect x="283" y="413" width="1" height="13" fill="#33ff00"/>
<rect x="288" y="413" width="1" height="13" fill="#33ff00"/>
<rect x="305" y="413" width="1" height="13" fill="#33ff00"/>
<rect x="317" y="386" width="1" height="40" fill="#33ff00"/>
<rect x="321" y="413" width="1" height="13" fill="#33ff00"/>
<rect x="331" y="386" width="1" height="40" fill="#33ff00"/>
<rect x="332" y="386" width="1" height="40" fill="#33ff00"/>
<rect x="335" y="399" width="1" height="27" fill="#33ff00"/>
<rect x="337" y="413" width="1" height="13" fill="#33ff00"/>
<rect x="338" y="413" width="1" height="13" fill="#33ff00"/>
<rect x="340" y="413" width="1" height="13" fill="#33ff00"/>
<rect x="342" y="413" width="1" height="13" fill="#33ff00"/>
<rect x="346" y="413" width="1" height="13" fill="#33ff00"/>
<rect x="349" y="386" width="1" height="40" fill="#33ff00"/>
<rect x="351" y="399" width="1" height="27" fill="#33ff00"/>
<rect x="355" y="399" width="1" height="27" fill="#33ff00"/>
<rect x="357" y="413" width="1" height="13" fill="#33ff00"/>
<rect x="360" y="413" width="1" height="13" fill="#33ff00"/>
<rect x="362" y="399" width="1" height="27" fill="#33ff00"/>
<rect x="364" y="413" width="1" height="13" fill="#33ff00"/>
<rect x="366" y="413" width="1" height="13" fill="#33ff00"/>
<rect x="367" y="413" width="1" height="13" fill="#33ff00"/>
<rect x="369" y="413" width="1" height="13" fill="#33ff00"/>
<rect x="372" y="413" width="1" height="13" fill="#33ff00"/>
<rect x="376" y="386" width="1" height="40" fill="#33ff00"/>
<rect x="377" y="399" width="1" height="27" fill="#33ff00"/>
<rect x="383" y="386" width="1" height="40" fill="#33ff00"/>
<rect x="384" y="386" width="1" height="40" fill="#33ff00"/>
<rect x="385" y="413" width="1" height="13" fill="#33ff00"/>
<rect x="389" y="413" width="1" height="13" fill="#33ff00"/>
<rect x="394" y="399" width="1" height="27" fill="#33ff00"/>
<rect x="395" y="386" width="1" height="40" fill="#33ff00"/>
<rect x="401" y="373" width="1" height="53" fill="#33ff00"/>
<rect x="402" y="373" width="1" height="53" fill="#33ff00"/>
<rect x="403" y="373" width="1" height="53" fill="#33ff00"/>
<rect x="404" y="413" width="1" height="13" fill="#33ff00"/>
<rect x="414" y="399" width="1" height="27" fill="#33ff00"/>
<rect x="415" y="399" width="1" height="27" fill="#33ff00"/>
<rect x="416" y="413" width="1" height="13" fill="#33ff00"/>
<rect x="418" y="399" width="1" height="27" fill="#33ff00"/>
<rect x="420" y="386" width="1" height="40" fill="#33ff00"/>
<rect x="426" y="399" width="1" height="27" fill="#33ff00"/>
<rect x="435" y="373" width="1" height="53" fill="#33ff00"/>
<rect x="436" y="373" width="1" height="53" fill="#33ff00"/>
<rect x="437" y="373" width="1" height="53" fill="#33ff00"/>
<rect x="438" y="386" width="1" height="40" fill="#33ff00"/>
<rect x="439" y="386" width="1" height="40" fill="#33ff00"/>
<rect x="440" y="386" width="1" height="40" fill="#33ff00"/>
<rect x="441" y="413" width="1" height="13" fill="#33ff00"/>
<rect x="442" y="413" width="1" height="13" fill="#33ff00"/>
<rect x="48" y="361" width="1" height="1" fill="#ff00ff"/><rect x="49" y="359" width="1" height="3" fill="#ff00ff"/><rect x="50" y="359" width="1" height="3" fill="#ff00ff"/><rect x="51" y="359" width="1" height="4" fill="#ff00ff"/><rect x="52" y="359" width="1" height="4" fill="#ff00ff"/><rect x="53" y="359" width="1" height="3" fill="#ff00ff"/><rect x="54" y="358" width="1" height="3" fill="#ff00ff"/><rect x="55" y="359" width="1" height="2" fill="#ff00ff"/><rect x="56" y="359" width="1" height="1" fill="#ff00ff"/><rect x="57" y="358" width="1" height="2" fill="#ff00ff"/><rect x="58" y="359" width="1" height="2" fill="#ff00ff"/><rect x="59" y="360" width="1" height="2" fill="#ff00ff"/><rect x="60" y="361" width="1" height="2" fill="#ff00ff"/><rect x="61" y="360" width="1" height="2" fill="#ff00ff"/><rect x="62" y="360" width="1" height="2" fill="#ff00ff"/><rect x="63" y="358" width="1" height="4" fill="#ff00ff"/><rect x="64" y="359" width="1" height="3" fill="#ff00ff"/><rect x="65" y="358" width="1" height="3" fill="#ff00ff"/><rect x="66" y="355" width="1" height="6" fill="#ff00ff"/><rect x="67" y="354" width="1" height="7" fill="#ff00ff"/><rect x="68" y="354" width="1" height="8" fill="#ff00ff"/><rect x="69" y="361" width="1" height="1" fill="#ff00ff"/><rect x="70" y="358" width="1" height="8" fill="#ff00ff"/><rect x="71" y="358" width="1" height="2" fill="#ff00ff"/><rect x="72" y="358" width="1" height="4" fill="#ff00ff"/><rect x="73" y="353" width="1" height="9" fill="#ff00ff"/><rect x="74" y="353" width="1" height="9" fill="#ff00ff"/><rect x="75" y="359" width="1" height="3" fill="#ff00ff"/><rect x="76" y="359" width="1" height="3" fill="#ff00ff"/><rect x="77" y="359" width="1" height="3" fill="#ff00ff"/><rect x="78" y="358" width="1" height="4" fill="#ff00ff"/><rect x="79" y="358" width="1" height="4" fill="#ff00ff"/><rect x="80" y="358" width="1" height="4" fill="#ff00ff"/><rect x="81" y="358" width="1" height="4" fill="#ff00ff"/><rect x="82" y="358" width="1" height="2" fill="#ff00ff"/><rect x="83" y="358" width="1" height="4" fill="#ff00ff"/><rect x="84" y="360" width="1" height="2" fill="#ff00ff"/><rect x="85" y="348" width="1" height="13" fill="#ff00ff"/><rect x="86" y="349" width="1" height="6" fill="#ff00ff"/><rect x="87" y="345" width="1" height="5" fill="#ff00ff"/><rect x="88" y="348" width="1" height="6" fill="#ff00ff"/><rect x="89" y="347" width="1" height="4" fill="#ff00ff"/><rect x="90" y="347" width="1" height="4" fill="#ff00ff"/><rect x="91" y="347" width="1" height="5" fill="#ff00ff"/><rect x="92" y="347" width="1" height="4" fill="#ff00ff"/><rect x="93" y="349" width="1" height="3" fill="#ff00ff"/><rect x="94" y="347" width="1" height="5" fill="#ff00ff"/><rect x="95" y="347" width="1" height="2" fill="#ff00ff"/><rect x="96" y="348" width="1" height="4" fill="#ff00ff"/><rect x="97" y="349" width="1" height="3" fill="#ff00ff"/><rect x="98" y="346" width="1" height="5" fill="#ff00ff"/><rect x="99" y="344" width="1" height="8" fill="#ff00ff"/><rect x="100" y="344" width="1" height="6" fill="#ff00ff"/><rect x="101" y="347" width="1" height="4" fill="#ff00ff"/><rect x="102" y="347" width="1" height="5" fill="#ff00ff"/><rect x="103" y="347" width="1" height="4" fill="#ff00ff"/><rect x="104" y="347" width="1" height="4" fill="#ff00ff"/><rect x="105" y="347" width="1" height="1" fill="#ff00ff"/><rect x="106" y="347" width="1" height="5" fill="#ff00ff"/><rect x="107" y="347" width="1" height="2" fill="#ff00ff"/><rect x="108" y="347" width="1" height="5" fill="#ff00ff"/><rect x="109" y="347" width="1" height="5" fill="#ff00ff"/><rect x="110" y="349" width="1" height="3" fill="#ff00ff"/><rect x="111" y="351" width="1" height="2" fill="#ff00ff"/><rect x="112" y="348" width="1" height="4" fill="#ff00ff"/><rect x="113" y="348" width="1" height="5" fill="#ff00ff"/><rect x="114" y="347" width="1" height="2" fill="#ff00ff"/><rect x="115" y="347" width="1" height="4" fill="#ff00ff"/><rect x="116" y="349" width="1" height="3" fill="#ff00ff"/><rect x="117" y="348" width="1" height="4" fill="#ff00ff"/><rect x="118" y="348" width="1" height="3" fill="#ff00ff"/><rect x="119" y="348" width="1" height="2" fill="#ff00ff"/><rect x="120" y="348" width="1" height="3" fill="#ff00ff"/><rect x="121" y="347" width="1" height="3" fill="#ff00ff"/><rect x="122" y="347" width="1" height="3" fill="#ff00ff"/><rect x="123" y="348" width="1" height="5" fill="#ff00ff"/><rect x="124" y="347" width="1" height="3" fill="#ff00ff"/><rect x="125" y="347" width="1" height="5" fill="#ff00ff"/><rect x="126" y="347" width="1" height="6" fill="#ff00ff"/><rect x="127" y="345" width="1" height="4" fill="#ff00ff"/><rect x="128" y="345" width="1" height="5" fill="#ff00ff"/><rect x="129" y="347" width="1" height="3" fill="#ff00ff"/><rect x="130" y="348" width="1" height="3" fill="#ff00ff"/><rect x="131" y="348" width="1" height="4" fill="#ff00ff"/><rect x="132" y="348" width="1" height="2" fill="#ff00ff"/><rect x="133" y="343" width="1" height="8" fill="#ff00ff"/><rect x="134" y="350" width="1" height="3" fill="#ff00ff"/><rect x="135" y="348" width="1" height="3" fill="#ff00ff"/><rect x="136" y="350" width="1" height="4" fill="#ff00ff"/><rect x="137" y="346" width="1" height="8" fill="#ff00ff"/><rect x="138" y="348" width="1" height="2" fill="#ff00ff"/><rect x="139" y="348" width="1" height="4" fill="#ff00ff"/><rect x="140" y="349" width="1" height="3" fill="#ff00ff"/><rect x="141" y="347" width="1" height="4" fill="#ff00ff"/><rect x="142" y="345" width="1" height="3" fill="#ff00ff"/><rect x="143" y="347" width="1" height="4" fill="#ff00ff"/><rect x="144" y="347" width="1" height="6" fill="#ff00ff"/><rect x="145" y="348" width="1" height="5" fill="#ff00ff"/><rect x="146" y="348" width="1" height="3" fill="#ff00ff"/><rect x="147" y="349" width="1" height="4" fill="#ff00ff"/><rect x="148" y="348" width="1" height="3" fill="#ff00ff"/><rect x="149" y="348" width="1" height="5" fill="#ff00ff"/><rect x="150" y="349" width="1" height="2" fill="#ff00ff"/><rect x="151" y="348" width="1" height="2" fill="#ff00ff"/><rect x="152" y="344" width="1" height="6" fill="#ff00ff"/><rect x="153" y="349" width="1" height="2" fill="#ff00ff"/><rect x="154" y="350" width="1" height="3" fill="#ff00ff"/><rect x="155" y="348" width="1" height="5" fill="#ff00ff"/><rect x="156" y="348" width="1" height="5" fill="#ff00ff"/><rect x="157" y="348" width="1" height="5" fill="#ff00ff"/><rect x="158" y="349" width="1" height="3" fill="#ff00ff"/><rect x="159" y="348" width="1" height="4" fill="#ff00ff"/><rect x="160" y="345" width="1" height="6" fill="#ff00ff"/><rect x="161" y="345" width="1" height="7" fill="#ff00ff"/><rect x="162" y="349" width="1" height="3" fill="#ff00ff"/><rect x="163" y="347" width="1" height="5" fill="#ff00ff"/><rect x="164" y="348" width="1" height="2" fill="#ff00ff"/><rect x="165" y="348" width="1" height="4" fill="#ff00ff"/><rect x="166" y="349" width="1" height="3" fill="#ff00ff"/><rect x="167" y="349" width="1" height="3" fill="#ff00ff"/><rect x="168" y="348" width="1" height="4" fill="#ff00ff"/><rect x="169" y="347" width="1" height="6" fill="#ff00ff"/><rect x="170" y="347" width="1" height="6" fill="#ff00ff"/><rect x="171" y="348" width="1" height="2" fill="#ff00ff"/><rect x="172" y="344" width="1" height="8" fill="#ff00ff"/><rect x="173" y="347" width="1" height="5" fill="#ff00ff"/><rect x="174" y="347" width="1" height="3" fill="#ff00ff"/><rect x="175" y="348" width="1" height="4" fill="#ff00ff"/><rect x="176" y="349" width="1" height="3" fill="#ff00ff"/><rect x="177" y="347" width="1" height="4" fill="#ff00ff"/><rect x="178" y="347" width="1" height="2" fill="#ff00ff"/><rect x="179" y="347" width="1" height="2" fill="#ff00ff"/><rect x="180" y="347" width="1" height="2" fill="#ff00ff"/><rect x="181" y="346" width="1" height="4" fill="#ff00ff"/><rect x="182" y="346" width="1" height="7" fill="#ff00ff"/><rect x="183" y="347" width="1" height="3" fill="#ff00ff"/><rect x="184" y="348" width="1" height="4" fill="#ff00ff"/><rect x="185" y="347" width="1" height="5" fill="#ff00ff"/><rect x="186" y="348" width="1" height="4" fill="#ff00ff"/><rect x="187" y="349" width="1" height="3" fill="#ff00ff"/><rect x="188" y="347" width="1" height="5" fill="#ff00ff"/><rect x="189" y="347" width="1" height="5" fill="#ff00ff"/><rect x="190" y="347" width="1" height="5" fill="#ff00ff"/><rect x="191" y="351" width="1" height="1" fill="#ff00ff"/><rect x="192" y="347" width="1" height="5" fill="#ff00ff"/><rect x="193" y="347" width="1" height="3" fill="#ff00ff"/><rect x="194" y="347" width="1" height="2" fill="#ff00ff"/><rect x="195" y="348" width="1" height="4" fill="#ff00ff"/><rect x="196" y="348" width="1" height="4" fill="#ff00ff"/><rect x="197" y="348" width="1" height="4" fill="#ff00ff"/><rect x="198" y="350" width="1" height="2" fill="#ff00ff"/><rect x="199" y="347" width="1" height="4" fill="#ff00ff"/><rect x="200" y="347" width="1" height="3" fill="#ff00ff"/><rect x="201" y="348" width="1" height="2" fill="#ff00ff"/><rect x="202" y="347" width="1" height="2" fill="#ff00ff"/><rect x="203" y="347" width="1" height="3" fill="#ff00ff"/><rect x="204" y="348" width="1" height="3" fill="#ff00ff"/><rect x="205" y="347" width="1" height="6" fill="#ff00ff"/><rect x="206" y="347" width="1" height="6" fill="#ff00ff"/><rect x="207" y="350" width="1" height="1" fill="#ff00ff"/><rect x="208" y="349" width="1" height="3" fill="#ff00ff"/><rect x="209" y="347" width="1" height="4" fill="#ff00ff"/><rect x="210" y="349" width="1" height="2" fill="#ff00ff"/><rect x="211" y="345" width="1" height="6" fill="#ff00ff"/><rect x="212" y="345" width="1" height="6" fill="#ff00ff"/><rect x="213" y="347" width="1" height="6" fill="#ff00ff"/><rect x="214" y="348" width="1" height="5" fill="#ff00ff"/><rect x="215" y="351" width="1" height="2" fill="#ff00ff"/><rect x="216" y="348" width="1" height="5" fill="#ff00ff"/><rect x="217" y="349" width="1" height="3" fill="#ff00ff"/><rect x="218" y="347" width="1" height="4" fill="#ff00ff"/><rect x="219" y="349" width="1" height="3" fill="#ff00ff"/><rect x="220" y="347" width="1" height="7" fill="#ff00ff"/><rect x="221" y="348" width="1" height="6" fill="#ff00ff"/><rect x="222" y="348" width="1" height="4" fill="#ff00ff"/><rect x="223" y="349" width="1" height="3" fill="#ff00ff"/><rect x="224" y="348" width="1" height="4" fill="#ff00ff"/><rect x="225" y="347" width="1" height="5" fill="#ff00ff"/><rect x="226" y="347" width="1" height="9" fill="#ff00ff"/><rect x="227" y="347" width="1" height="5" fill="#ff00ff"/><rect x="228" y="346" width="1" height="3" fill="#ff00ff"/><rect x="229" y="348" width="1" height="3" fill="#ff00ff"/><rect x="230" y="347" width="1" height="4" fill="#ff00ff"/><rect x="231" y="347" width="1" height="4" fill="#ff00ff"/><rect x="232" y="347" width="1" height="4" fill="#ff00ff"/><rect x="233" y="348" width="1" height="3" fill="#ff00ff"/><rect x="234" y="349" width="1" height="3" fill="#ff00ff"/><rect x="235" y="349" width="1" height="4" fill="#ff00ff"/><rect x="236" y="350" width="1" height="3" fill="#ff00ff"/><rect x="237" y="350" width="1" height="2" fill="#ff00ff"/><rect x="238" y="348" width="1" height="4" fill="#ff00ff"/><rect x="239" y="347" width="1" height="4" fill="#ff00ff"/><rect x="240" y="347" width="1" height="6" fill="#ff00ff"/><rect x="241" y="348" width="1" height="5" fill="#ff00ff"/><rect x="242" y="347" width="1" height="2" fill="#ff00ff"/><rect x="243" y="348" width="1" height="4" fill="#ff00ff"/><rect x="244" y="347" width="1" height="7" fill="#ff00ff"/><rect x="245" y="347" width="1" height="4" fill="#ff00ff"/><rect x="246" y="346" width="1" height="6" fill="#ff00ff"/><rect x="247" y="346" width="1" height="4" fill="#ff00ff"/><rect x="248" y="349" width="1" height="4" fill="#ff00ff"/><rect x="249" y="351" width="1" height="2" fill="#ff00ff"/><rect x="250" y="347" width="1" height="5" fill="#ff00ff"/><rect x="251" y="347" width="1" height="2" fill="#ff00ff"/><rect x="252" y="347" width="1" height="1" fill="#ff00ff"/><rect x="253" y="347" width="1" height="7" fill="#ff00ff"/><rect x="254" y="350" width="1" height="2" fill="#ff00ff"/><rect x="255" y="344" width="1" height="8" fill="#ff00ff"/><rect x="256" y="344" width="1" height="8" fill="#ff00ff"/><rect x="257" y="346" width="1" height="4" fill="#ff00ff"/><rect x="258" y="347" width="1" height="2" fill="#ff00ff"/><rect x="259" y="347" width="1" height="4" fill="#ff00ff"/><rect x="260" y="346" width="1" height="3" fill="#ff00ff"/><rect x="261" y="346" width="1" height="3" fill="#ff00ff"/><rect x="262" y="346" width="1" height="3" fill="#ff00ff"/><rect x="263" y="347" width="1" height="3" fill="#ff00ff"/><rect x="264" y="346" width="1" height="6" fill="#ff00ff"/><rect x="265" y="346" width="1" height="5" fill="#ff00ff"/><rect x="266" y="346" width="1" height="5" fill="#ff00ff"/><rect x="267" y="346" width="1" height="4" fill="#ff00ff"/><rect x="268" y="346" width="1" height="1" fill="#ff00ff"/><rect x="269" y="346" width="1" height="4" fill="#ff00ff"/><rect x="270" y="348" width="1" height="4" fill="#ff00ff"/><rect x="271" y="347" width="1" height="3" fill="#ff00ff"/><rect x="272" y="347" width="1" height="3" fill="#ff00ff"/><rect x="273" y="345" width="1" height="4" fill="#ff00ff"/><rect x="274" y="345" width="1" height="4" fill="#ff00ff"/><rect x="275" y="347" width="1" height="3" fill="#ff00ff"/><rect x="276" y="344" width="1" height="4" fill="#ff00ff"/><rect x="277" y="344" width="1" height="7" fill="#ff00ff"/><rect x="278" y="346" width="1" height="5" fill="#ff00ff"/><rect x="279" y="346" width="1" height="3" fill="#ff00ff"/><rect x="280" y="346" width="1" height="2" fill="#ff00ff"/><rect x="281" y="346" width="1" height="4" fill="#ff00ff"/><rect x="282" y="345" width="1" height="5" fill="#ff00ff"/><rect x="283" y="345" width="1" height="5" fill="#ff00ff"/><rect x="284" y="345" width="1" height="5" fill="#ff00ff"/><rect x="285" y="344" width="1" height="4" fill="#ff00ff"/><rect x="286" y="343" width="1" height="6" fill="#ff00ff"/><rect x="287" y="344" width="1" height="5" fill="#ff00ff"/><rect x="288" y="344" width="1" height="7" fill="#ff00ff"/><rect x="289" y="344" width="1" height="3" fill="#ff00ff"/><rect x="290" y="346" width="1" height="1" fill="#ff00ff"/><rect x="291" y="344" width="1" height="5" fill="#ff00ff"/><rect x="292" y="344" width="1" height="5" fill="#ff00ff"/><rect x="293" y="344" width="1" height="6" fill="#ff00ff"/><rect x="294" y="346" width="1" height="4" fill="#ff00ff"/><rect x="295" y="344" width="1" height="5" fill="#ff00ff"/><rect x="296" y="344" width="1" height="6" fill="#ff00ff"/><rect x="297" y="347" width="1" height="5" fill="#ff00ff"/><rect x="298" y="344" width="1" height="8" fill="#ff00ff"/><rect x="299" y="344" width="1" height="4" fill="#ff00ff"/><rect x="300" y="345" width="1" height="4" fill="#ff00ff"/><rect x="301" y="346" width="1" height="4" fill="#ff00ff"/><rect x="302" y="345" width="1" height="5" fill="#ff00ff"/><rect x="303" y="343" width="1" height="4" fill="#ff00ff"/><rect x="304" y="343" width="1" height="4" fill="#ff00ff"/><rect x="305" y="346" width="1" height="3" fill="#ff00ff"/><rect x="306" y="346" width="1" height="5" fill="#ff00ff"/><rect x="307" y="344" width="1" height="7" fill="#ff00ff"/><rect x="308" y="345" width="1" height="4" fill="#ff00ff"/><rect x="309" y="344" width="1" height="8" fill="#ff00ff"/><rect x="310" y="344" width="1" height="3" fill="#ff00ff"/><rect x="311" y="344" width="1" height="5" fill="#ff00ff"/><rect x="312" y="345" width="1" height="4" fill="#ff00ff"/><rect x="313" y="344" width="1" height="5" fill="#ff00ff"/><rect x="314" y="343" width="1" height="2" fill="#ff00ff"/><rect x="315" y="344" width="1" height="3" fill="#ff00ff"/><rect x="316" y="344" width="1" height="3" fill="#ff00ff"/><rect x="317" y="344" width="1" height="5" fill="#ff00ff"/><rect x="318" y="346" width="1" height="3" fill="#ff00ff"/><rect x="319" y="339" width="1" height="10" fill="#ff00ff"/><rect x="320" y="339" width="1" height="7" fill="#ff00ff"/><rect x="321" y="344" width="1" height="5" fill="#ff00ff"/><rect x="322" y="344" width="1" height="5" fill="#ff00ff"/><rect x="323" y="343" width="1" height="8" fill="#ff00ff"/><rect x="324" y="343" width="1" height="8" fill="#ff00ff"/><rect x="325" y="343" width="1" height="2" fill="#ff00ff"/><rect x="326" y="339" width="1" height="10" fill="#ff00ff"/><rect x="327" y="347" width="1" height="2" fill="#ff00ff"/><rect x="328" y="344" width="1" height="5" fill="#ff00ff"/><rect x="329" y="344" width="1" height="2" fill="#ff00ff"/><rect x="330" y="343" width="1" height="4" fill="#ff00ff"/><rect x="331" y="344" width="1" height="3" fill="#ff00ff"/><rect x="332" y="344" width="1" height="5" fill="#ff00ff"/><rect x="333" y="344" width="1" height="5" fill="#ff00ff"/><rect x="334" y="344" width="1" height="3" fill="#ff00ff"/><rect x="335" y="345" width="1" height="7" fill="#ff00ff"/><rect x="336" y="338" width="1" height="10" fill="#ff00ff"/><rect x="337" y="338" width="1" height="9" fill="#ff00ff"/><rect x="338" y="345" width="1" height="3" fill="#ff00ff"/><rect x="339" y="344" width="1" height="4" fill="#ff00ff"/><rect x="340" y="342" width="1" height="3" fill="#ff00ff"/><rect x="341" y="344" width="1" height="3" fill="#ff00ff"/><rect x="342" y="343" width="1" height="4" fill="#ff00ff"/><rect x="343" y="343" width="1" height="5" fill="#ff00ff"/><rect x="344" y="343" width="1" height="5" fill="#ff00ff"/><rect x="345" y="343" width="1" height="2" fill="#ff00ff"/><rect x="346" y="343" width="1" height="4" fill="#ff00ff"/><rect x="347" y="342" width="1" height="5" fill="#ff00ff"/><rect x="348" y="342" width="1" height="3" fill="#ff00ff"/><rect x="349" y="344" width="1" height="4" fill="#ff00ff"/><rect x="350" y="344" width="1" height="4" fill="#ff00ff"/><rect x="351" y="344" width="1" height="3" fill="#ff00ff"/><rect x="352" y="344" width="1" height="2" fill="#ff00ff"/><rect x="353" y="339" width="1" height="7" fill="#ff00ff"/><rect x="354" y="339" width="1" height="9" fill="#ff00ff"/><rect x="355" y="347" width="1" height="1" fill="#ff00ff"/><rect x="356" y="343" width="1" height="5" fill="#ff00ff"/><rect x="357" y="343" width="1" height="4" fill="#ff00ff"/><rect x="358" y="342" width="1" height="5" fill="#ff00ff"/><rect x="359" y="341" width="1" height="9" fill="#ff00ff"/><rect x="360" y="341" width="1" height="5" fill="#ff00ff"/><rect x="361" y="345" width="1" height="1" fill="#ff00ff"/><rect x="362" y="342" width="1" height="4" fill="#ff00ff"/><rect x="363" y="342" width="1" height="5" fill="#ff00ff"/><rect x="364" y="343" width="1" height="3" fill="#ff00ff"/><rect x="365" y="343" width="1" height="5" fill="#ff00ff"/><rect x="366" y="344" width="1" height="4" fill="#ff00ff"/><rect x="367" y="341" width="1" height="7" fill="#ff00ff"/><rect x="368" y="340" width="1" height="4" fill="#ff00ff"/><rect x="369" y="340" width="1" height="7" fill="#ff00ff"/><rect x="370" y="340" width="1" height="6" fill="#ff00ff"/><rect x="371" y="342" width="1" height="4" fill="#ff00ff"/><rect x="372" y="344" width="1" height="4" fill="#ff00ff"/><rect x="373" y="344" width="1" height="4" fill="#ff00ff"/><rect x="374" y="344" width="1" height="4" fill="#ff00ff"/><rect x="375" y="345" width="1" height="3" fill="#ff00ff"/><rect x="376" y="343" width="1" height="4" fill="#ff00ff"/><rect x="377" y="345" width="1" height="3" fill="#ff00ff"/><rect x="378" y="342" width="1" height="6" fill="#ff00ff"/><rect x="379" y="344" width="1" height="2" fill="#ff00ff"/><rect x="380" y="342" width="1" height="4" fill="#ff00ff"/><rect x="381" y="342" width="1" height="4" fill="#ff00ff"/><rect x="382" y="342" width="1" height="6" fill="#ff00ff"/><rect x="383" y="343" width="1" height="6" fill="#ff00ff"/><rect x="384" y="343" width="1" height="5" fill="#ff00ff"/><rect x="385" y="344" width="1" height="4" fill="#ff00ff"/><rect x="386" y="345" width="1" height="3" fill="#ff00ff"/><rect x="387" y="343" width="1" height="5" fill="#ff00ff"/><rect x="388" y="343" width="1" height="5" fill="#ff00ff"/><rect x="389" y="346" width="1" height="2" fill="#ff00ff"/><rect x="390" y="343" width="1" height="4" fill="#ff00ff"/><rect x="391" y="343" width="1" height="2" fill="#ff00ff"/><rect x="392" y="344" width="1" height="4" fill="#ff00ff"/><rect x="393" y="342" width="1" height="6" fill="#ff00ff"/><rect x="394" y="342" width="1" height="6" fill="#ff00ff"/><rect x="395" y="343" width="1" height="4" fill="#ff00ff"/><rect x="396" y="341" width="1" height="6" fill="#ff00ff"/><rect x="397" y="346" width="1" height="2" fill="#ff00ff"/><rect x="398" y="341" width="1" height="7" fill="#ff00ff"/><rect x="399" y="341" width="1" height="6" fill="#ff00ff"/><rect x="400" y="344" width="1" height="3" fill="#ff00ff"/><rect x="401" y="343" width="1" height="4" fill="#ff00ff"/><rect x="402" y="344" width="1" height="4" fill="#ff00ff"/><rect x="403" y="347" width="1" height="1" fill="#ff00ff"/><rect x="404" y="344" width="1" height="4" fill="#ff00ff"/><rect x="405" y="342" width="1" height="4" fill="#ff00ff"/><rect x="406" y="343" width="1" height="4" fill="#ff00ff"/><rect x="407" y="339" width="1" height="5" fill="#ff00ff"/><rect x="408" y="339" width="1" height="8" fill="#ff00ff"/><rect x="409" y="344" width="1" height="3" fill="#ff00ff"/><rect x="410" y="343" width="1" height="4" fill="#ff00ff"/><rect x="411" y="345" width="1" height="3" fill="#ff00ff"/><rect x="412" y="343" width="1" height="6" fill="#ff00ff"/><rect x="413" y="342" width="1" height="7" fill="#ff00ff"/><rect x="414" y="342" width="1" height="5" fill="#ff00ff"/><rect x="415" y="344" width="1" height="3" fill="#ff00ff"/><rect x="416" y="343" width="1" height="4" fill="#ff00ff"/><rect x="417" y="343" width="1" height="5" fill="#ff00ff"/><rect x="418" y="343" width="1" height="4" fill="#ff00ff"/><rect x="419" y="343" width="1" height="3" fill="#ff00ff"/><rect x="420" y="342" width="1" height="5" fill="#ff00ff"/><rect x="421" y="339" width="1" height="7" fill="#ff00ff"/><rect x="422" y="345" width="1" height="5" fill="#ff00ff"/><rect x="423" y="345" width="1" height="4" fill="#ff00ff"/><rect x="424" y="344" width="1" height="5" fill="#ff00ff"/><rect x="425" y="344" width="1" height="4" fill="#ff00ff"/><rect x="426" y="345" width="1" height="3" fill="#ff00ff"/><rect x="427" y="344" width="1" height="2" fill="#ff00ff"/><rect x="428" y="344" width="1" height="3" fill="#ff00ff"/><rect x="429" y="345" width="1" height="2" fill="#ff00ff"/><rect x="430" y="345" width="1" height="3" fill="#ff00ff"/><rect x="431" y="344" width="1" height="3" fill="#ff00ff"/><rect x="432" y="344" width="1" height="4" fill="#ff00ff"/><rect x="433" y="346" width="1" height="1" fill="#ff00ff"/><rect x="434" y="343" width="1" height="6" fill="#ff00ff"/><rect x="435" y="343" width="1" height="4" fill="#ff00ff"/><rect x="436" y="343" width="1" height="4" fill="#ff00ff"/><rect x="437" y="342" width="1" height="6" fill="#ff00ff"/><rect x="438" y="344" width="1" height="4" fill="#ff00ff"/><rect x="439" y="344" width="1" height="3" fill="#ff00ff"/><rect x="440" y="344" width="1" height="5" fill="#ff00ff"/><rect x="441" y="346" width="1" height="3" fill="#ff00ff"/><rect x="442" y="344" width="1" height="3" fill="#ff00ff"/><rect x="443" y="343" width="1" height="5" fill="#ff00ff"/><rect x="444" y="344" width="1" height="4" fill="#ff00ff"/><rect x="445" y="345" width="1" height="2" fill="#ff00ff"/><rect x="446" y="344" width="1" height="2" fill="#ff00ff"/><rect x="447" y="343" width="1" height="4" fill="#ff00ff"/><rect x="448" y="344" width="1" height="4" fill="#ff00ff"/><rect x="449" y="342" width="1" height="5" fill="#ff00ff"/><rect x="450" y="344" width="1" height="4" fill="#ff00ff"/><rect x="451" y="343" width="1" height="5" fill="#ff00ff"/><rect x="452" y="343" width="1" height="4" fill="#ff00ff"/>
<rect x="454" y="293" width="1" height="133" fill="#d8d8d8"/>
</svg>
<div class="t" style="right:604px;top:124px;text-align:right">100</div>
<div class="t" style="right:604px;top:151px;text-align:right">80</div>
<div class="t" style="right:604px;top:178px;text-align:right">60</div>
<div class="t" style="right:604px;top:204px;text-align:right">40</div>
<div class="t" style="right:604px;top:231px;text-align:right">20</div>
<div class="t" style="left:471px;top:124px">20</div>
<div class="t" style="left:471px;top:151px">16</div>
<div class="t" style="left:471px;top:178px">12</div>
<div class="t" style="left:471px;top:204px">8</div>
<div class="t" style="left:471px;top:231px">4</div>
<div class="t" style="left:31.0px;width:40px;top:268px;text-align:center">0.0</div>
<div class="t" style="left:77.3px;width:40px;top:268px;text-align:center">0.5</div>
<div class="t" style="left:123.7px;width:40px;top:268px;text-align:center">1.0</div>
<div class="t" style="left:170.0px;width:40px;top:268px;text-align:center">1.5</div>
<div class="t" style="left:216.3px;width:40px;top:268px;text-align:center">2.0</div>
<div class="t" style="left:262.7px;width:40px;top:268px;text-align:center">2.5</div>
<div class="t" style="left:309.0px;width:40px;top:268px;text-align:center">3.0</div>
<div class="t" style="left:355.3px;width:40px;top:268px;text-align:center">3.5</div>
<div class="t" style="left:401.7px;width:40px;top:268px;text-align:center">4.0</div>
<div class="t" style="left:448.0px;width:40px;top:268px;text-align:center">4.5</div>
<div class="t" style="right:604px;top:286px;text-align:right">10</div>
<div class="t" style="right:604px;top:313px;text-align:right">8</div>
<div class="t" style="right:604px;top:340px;text-align:right">6</div>
<div class="t" style="right:604px;top:366px;text-align:right">4</div>
<div class="t" style="right:604px;top:393px;text-align:right">2</div>
<div class="t" style="left:471px;top:286px">20</div>
<div class="t" style="left:471px;top:313px">16</div>
<div class="t" style="left:471px;top:340px">12</div>
<div class="t" style="left:471px;top:366px">8</div>
<div class="t" style="left:471px;top:393px">4</div>
<div class="t" style="left:31.0px;width:40px;top:430px;text-align:center">0.0</div>
<div class="t" style="left:77.3px;width:40px;top:430px;text-align:center">0.5</div>
<div class="t" style="left:123.7px;width:40px;top:430px;text-align:center">1.0</div>
<div class="t" style="left:170.0px;width:40px;top:430px;text-align:center">1.5</div>
<div class="t" style="left:216.3px;width:40px;top:430px;text-align:center">2.0</div>
<div class="t" style="left:262.7px;width:40px;top:430px;text-align:center">2.5</div>
<div class="t" style="left:309.0px;width:40px;top:430px;text-align:center">3.0</div>
<div class="t" style="left:355.3px;width:40px;top:430px;text-align:center">3.5</div>
<div class="t" style="left:401.7px;width:40px;top:430px;text-align:center">4.0</div>
<div class="t" style="left:448.0px;width:40px;top:430px;text-align:center">4.5</div>
<div class="b grp" style="left:491px;top:124px;width:139px;height:84px"></div>
<div class="t" style="left:498px;top:120px;padding:0 2px 0 2px;background:#d6d3ce">Disc info</div>
<div class="t" style="left:500px;top:134px;color:#000;">Type:</div>
<div class="t" style="left:545px;top:134px;color:#000080;">DVD+R</div>
<div class="t" style="left:500px;top:151px;color:#000;">ID:</div>
<div class="t" style="left:545px;top:151px;color:#000080;">YUDEN000 T03</div>
<div class="t" style="left:500px;top:169px;color:#000;">Date:</div>
<div class="t" style="left:545px;top:169px;color:#000080;">n/a</div>
<div class="t" style="left:500px;top:187px;color:#000;">Label:</div>
<div class="t" style="left:545px;top:187px;color:#000080;">n/a</div>
<div class="b grp" style="left:491px;top:215px;width:139px;height:204px"></div>
<div class="t" style="left:498px;top:211px;padding:0 2px 0 2px;background:#d6d3ce">Settings</div>
<div class="b sunken" style="left:501px;top:225px;width:82px;height:21px"></div>
<div class="t" style="left:505px;top:230px;color:#000;">8&nbsp;X</div>
<div class="b raised" style="left:566px;top:227px;width:16px;height:17px"></div>
<svg width="645" height="523"><path d="M570 234 h7 l-3.5 4 z" fill="#000"/></svg>
<div class="b raised" style="left:592px;top:224px;width:23px;height:23px"></div>
<svg width="645" height="523">
<rect x="596.5" y="227.5" width="13" height="15" fill="#fff" stroke="#000" stroke-width="1" shape-rendering="crispEdges"/>
<path d="M599.3 236 V233.5 Q599.3 231.6 601.3 231.6 H603.5" fill="none" stroke="#108010" stroke-width="1.2"/>
<path d="M603 229.3 L605.8 231.6 L603 233.9 Z" fill="#108010"/>
<path d="M606.7 234.5 V237 Q606.7 239.1 604.7 239.1 H603" fill="none" stroke="#108010" stroke-width="1.2"/>
<path d="M603.5 236.8 L600.7 239.1 L603.5 241.4 Z" fill="#108010"/>
</svg>
<div class="t" style="left:502px;top:257px;color:#000;">Start:</div>
<div class="b sunken" style="left:554px;top:251px;width:60px;height:20px"></div>
<div class="t" style="left:558px;top:256px;color:#000;">0000 MB</div>
<div class="t" style="left:502px;top:280px;color:#000;">End:</div>
<div class="b sunken" style="left:554px;top:274px;width:60px;height:20px"></div>
<div class="t" style="left:558px;top:279px;color:#000;">4480 MB</div>
<div class="b" style="left:502px;top:296px;width:13px;height:13px;background:#fff;border:1px solid;border-color:#808080 #fff #fff #808080;box-shadow:inset 1px 1px #404040, inset -1px -1px #d6d3ce"></div>
<div class="t" style="left:520px;top:296px;color:#000;">Quick scan</div>
<div class="b" style="left:502px;top:313px;width:13px;height:13px;background:#fff;border:1px solid;border-color:#808080 #fff #fff #808080;box-shadow:inset 1px 1px #404040, inset -1px -1px #d6d3ce"></div>
<svg width="645" height="523" shape-rendering="crispEdges"><path d="M505 318h1v1h1v1h1v-1h1v-1h1v-1h1v-1h1v3h-1v1h-1v1h-1v1h-1v1h-1v-1h-1v-1h-1z" fill="#000"/></svg>
<div class="t" style="left:520px;top:313px;color:#000;">Show C1/PIE</div>
<div class="b" style="left:502px;top:329px;width:13px;height:13px;background:#fff;border:1px solid;border-color:#808080 #fff #fff #808080;box-shadow:inset 1px 1px #404040, inset -1px -1px #d6d3ce"></div>
<svg width="645" height="523" shape-rendering="crispEdges"><path d="M505 334h1v1h1v1h1v-1h1v-1h1v-1h1v-1h1v3h-1v1h-1v1h-1v1h-1v1h-1v-1h-1v-1h-1z" fill="#000"/></svg>
<div class="t" style="left:520px;top:329px;color:#000;">Show C2/PIF</div>
<div class="b" style="left:502px;top:345px;width:13px;height:13px;background:#fff;border:1px solid;border-color:#808080 #fff #fff #808080;box-shadow:inset 1px 1px #404040, inset -1px -1px #d6d3ce"></div>
<svg width="645" height="523" shape-rendering="crispEdges"><path d="M505 350h1v1h1v1h1v-1h1v-1h1v-1h1v-1h1v3h-1v1h-1v1h-1v1h-1v1h-1v-1h-1v-1h-1z" fill="#000"/></svg>
<div class="t" style="left:520px;top:345px;color:#000;">Show jitter</div>
<div class="b" style="left:502px;top:361px;width:13px;height:13px;background:#fff;border:1px solid;border-color:#808080 #fff #fff #808080;box-shadow:inset 1px 1px #404040, inset -1px -1px #d6d3ce"></div>
<svg width="645" height="523" shape-rendering="crispEdges"><path d="M505 366h1v1h1v1h1v-1h1v-1h1v-1h1v-1h1v3h-1v1h-1v1h-1v1h-1v1h-1v-1h-1v-1h-1z" fill="#000"/></svg>
<div class="t" style="left:520px;top:361px;color:#000;">Show read speed</div>
<div class="b" style="left:502px;top:377px;width:13px;height:13px;background:#d6d3ce;border:1px solid;border-color:#808080 #fff #fff #808080;box-shadow:inset 1px 1px #404040, inset -1px -1px #d6d3ce"></div>
<svg width="645" height="523" shape-rendering="crispEdges"><path d="M505 382h1v1h1v1h1v-1h1v-1h1v-1h1v-1h1v3h-1v1h-1v1h-1v1h-1v1h-1v-1h-1v-1h-1z" fill="#808080"/></svg>
<div class="t" style="left:521px;top:378px;color:#fff;">Show write speed</div>
<div class="t" style="left:520px;top:377px;color:#808080;">Show write speed</div>
<div class="b raised" style="left:550px;top:393px;width:74px;height:23px"></div>
<div class="t" style="left:564px;top:398px;color:#000;">Advanced</div>
<div class="b grp" style="left:491px;top:425px;width:139px;height:26px"></div>
<div class="t" style="left:502px;top:433px;color:#000;">Quality score:</div>
<div class="t" style="right:24px;top:433px;color:#000080;text-align:right;">95</div>
<div class="b grp" style="left:491px;top:457px;width:139px;height:56px"></div>
<svg width="645" height="523">
<defs><radialGradient id="wd" cx="0.5" cy="0.5" r="0.5"><stop offset="0" stop-color="#e8e8e8"/><stop offset="0.4" stop-color="#dcdcdc"/><stop offset="0.85" stop-color="#c8c8c8"/><stop offset="1" stop-color="#a8a8a8"/></radialGradient></defs>
<circle cx="599.5" cy="482.5" r="18.5" fill="url(#wd)"/>
<path d="M599.5 482.5 L585 470 A18.5 18.5 0 0 1 596 464.3 Z" fill="#f4f4f4" opacity="0.6"/>
<circle cx="599.5" cy="482.5" r="6.5" fill="#e4e4e4" stroke="#c8c8c8" stroke-width="1"/>
<circle cx="599.5" cy="482.5" r="2.5" fill="#d6d3ce" stroke="#b0b0b0" stroke-width="0.8"/>
</svg>
<div class="t" style="left:502px;top:467px;color:#000;">Progress:</div>
<div class="t" style="right:24px;top:467px;color:#000080;text-align:right;">100 %</div>
<div class="t" style="left:502px;top:482px;color:#000;">Position:</div>
<div class="t" style="right:24px;top:482px;color:#000080;text-align:right;">4479 MB</div>
<div class="t" style="left:502px;top:497px;color:#000;">Speed:</div>
<div class="t" style="right:24px;top:497px;color:#000080;text-align:right;">8.35 X</div>
<div class="b grp" style="left:14px;top:457px;width:146px;height:57px"></div>
<div class="b" style="left:22px;top:450px;width:56px;height:14px;background:#d6d3ce"></div>
<div class="b" style="left:24px;top:454px;width:8px;height:8px;background:#00ffff;border:1px solid #000"></div>
<div class="t" style="left:35px;top:452px;color:#000;">PI Errors</div>
<div class="t" style="left:22px;top:468px;color:#000;">Average:</div>
<div class="t" style="right:494px;top:468px;color:#000080;text-align:right;">27.48</div>
<div class="t" style="left:22px;top:483px;color:#000;">Maximum:</div>
<div class="t" style="right:494px;top:483px;color:#000080;text-align:right;">100</div>
<div class="t" style="left:22px;top:498px;color:#000;">Total:</div>
<div class="t" style="right:494px;top:498px;color:#000080;text-align:right;">403769</div>
<div class="b grp" style="left:172px;top:457px;width:146px;height:57px"></div>
<div class="b" style="left:180px;top:450px;width:64px;height:14px;background:#d6d3ce"></div>
<div class="b" style="left:182px;top:454px;width:8px;height:8px;background:#ffff00;border:1px solid #000"></div>
<div class="t" style="left:193px;top:452px;color:#000;">PI Failures</div>
<div class="t" style="left:180px;top:468px;color:#000;">Average:</div>
<div class="t" style="right:336px;top:468px;color:#000080;text-align:right;">0.14</div>
<div class="t" style="left:180px;top:483px;color:#000;">Maximum:</div>
<div class="t" style="right:336px;top:483px;color:#000080;text-align:right;">9</div>
<div class="t" style="left:180px;top:498px;color:#000;">Total:</div>
<div class="t" style="right:336px;top:498px;color:#000080;text-align:right;">1467</div>
<div class="b grp" style="left:331px;top:457px;width:147px;height:43px"></div>
<div class="b" style="left:339px;top:450px;width:37px;height:14px;background:#d6d3ce"></div>
<div class="b" style="left:341px;top:454px;width:8px;height:8px;background:#ff00ff;border:1px solid #000"></div>
<div class="t" style="left:351px;top:452px;color:#000;">Jitter</div>
<div class="t" style="left:340px;top:468px;color:#000;">Average:</div>
<div class="t" style="right:176px;top:468px;color:#000080;text-align:right;">11.35 %</div>
<div class="t" style="left:340px;top:483px;color:#000;">Maximum:</div>
<div class="t" style="right:176px;top:483px;color:#000080;text-align:right;">13.5 %</div>
<div class="t" style="left:340px;top:502px;color:#000;">PO failures:</div>
<div class="t" style="right:176px;top:502px;color:#000080;text-align:right;">0</div>
<div class="t" style="left:561px;top:503px;font:bold 19px/20px 'Liberation Sans';color:rgba(255,255,255,0.4);transform-origin:0 0;transform:scaleX(0.63);letter-spacing:0px">CDRLabs.com</div>
</body></html>
